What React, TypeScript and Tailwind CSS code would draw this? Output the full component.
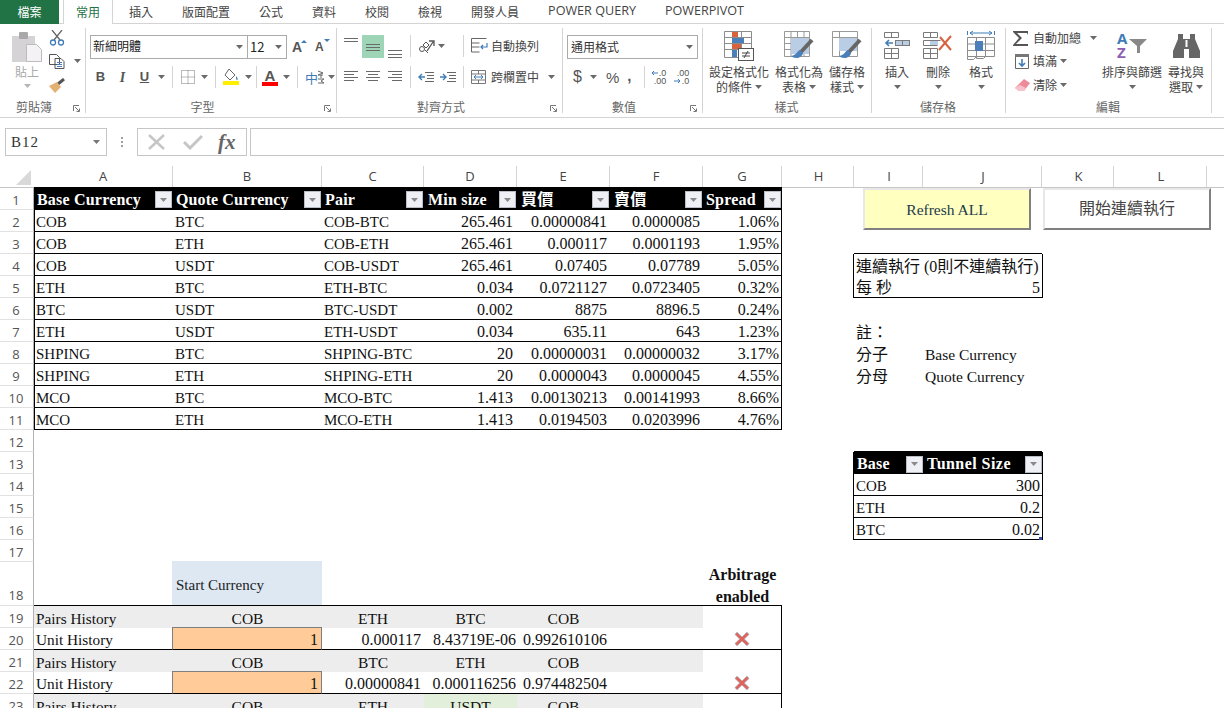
import React from "react";

const COLS = "grid grid-rows-[100%] grid-cols-[34px_139px_149px_102px_93px_93px_93px_79px_72px_69px_119px_72px_93px_17px]";
const UI = "font-['Noto_Sans_CJK_TC','Noto_Sans',sans-serif]";

const Caret = ({ c = "#6a6a6a" }: { c?: string }) => (
  <svg width="7" height="4" viewBox="0 0 7 4" className="shrink-0"><path d="M0 0h7L3.5 4z" fill={c} /></svg>
);
const Sep = () => <div className="w-px h-[22px] bg-[#d4d4d4] shrink-0" />;
const Launcher = () => (
  <svg width="8" height="8" viewBox="0 0 8 8" className="absolute right-[4px] bottom-0">
    <path d="M.5 6V.5H6M2 2l4 4M6.5 3.5v3h-3" fill="none" stroke="#777" />
  </svg>
);
const Lines = ({ ys, w = 14, lens }: { ys: number[]; w?: number; lens?: [number, number][] }) => (
  <svg width={w} height="14" viewBox={`0 0 ${w} 14`}>
    {ys.map((y, i) => (
      <path key={i} d={`M${lens ? lens[i][0] : 0} ${y + 0.5}H${lens ? lens[i][1] : w}`} stroke="#6a6a6a" />
    ))}
  </svg>
);

function Group({ w, label, launcher, children }: { w: string; label: string; launcher?: boolean; children: React.ReactNode }) {
  return (
    <div className={`${w} h-[85px] shrink-0 relative flex flex-col border-r border-[#d4d4d4]`}>
      <div className="flex-1 min-h-0">{children}</div>
      <div className={`h-[16px] leading-[20px] text-center text-[12px] text-[#666] ${launcher ? "pr-[17px]" : "pr-[1px]"}`}>{label}</div>
      {launcher && <Launcher />}
    </div>
  );
}

function Big({ w, icon, l1, l2, caret2, ml }: { w: string; icon: React.ReactNode; l1: string; l2?: string; caret2?: boolean; ml?: string }) {
  return (
    <div className={`${w} ${ml ?? ""} shrink-0 flex flex-col items-center`}>
      <div className="h-[36px] flex items-center justify-center">{icon}</div>
      <div className="h-[16px] leading-[16px] text-[12px] text-[#444] whitespace-nowrap">{l1}</div>
      <div className="h-[14px] leading-[14px] text-[12px] text-[#444] whitespace-nowrap flex items-center justify-center gap-[3px]">
        {l2}
        {caret2 !== false && <Caret />}
      </div>
    </div>
  );
}

const CFIcon = () => (
  <svg width="30" height="30" viewBox="0 0 30 30" fill="none">
    <path d="M.5.5h27v26H.5zM.5 6.5h27M.5 12.5h27M.5 18.5h27M8.500 .5v26M17.500 .5v26" stroke="#8c8c8c" />
    <rect x="8" y="1" width="6" height="5" fill="#d8623c" />
    <rect x="8" y="7" width="12" height="5" fill="#4a7fb9" />
    <rect x="8" y="13" width="9" height="5" fill="#d8623c" />
    <rect x="8" y="19" width="5" height="7" fill="#4a7fb9" />
    <rect x="14.500" y="17.500" width="15" height="12" fill="#fff" stroke="#555" />
    <path d="M18 22h8M18 25h8M24 20l-4 7" stroke="#444" />
  </svg>
);
const TableIcon = () => (
  <svg width="30" height="30" viewBox="0 0 30 30" fill="none">
    <path d="M.5.5h25v25H.5zM.5 6.500h25M.5 12.500h25M.5 18.500h25M7 .5v25M13.500 .5v25M20 .5v25" stroke="#999" />
    <rect x="7" y="7" width="18" height="16" fill="#b9cde5" />
    <path d="M28 9L17 21" stroke="#666" strokeWidth="4" />
    <path d="M16 19c-3 1-3 5-9 6 3 3 11 3 12-3z" fill="#4a7fb9" />
  </svg>
);
const StyleIcon = () => (
  <svg width="30" height="30" viewBox="0 0 30 30" fill="none">
    <path d="M.5.5h25v25H.5zM.5 6.500h25M7.500 .5v25" stroke="#999" />
    <rect x="7" y="7" width="18" height="13" fill="#b9cde5" />
    <path d="M28 9L17 21" stroke="#666" strokeWidth="4" />
    <path d="M16 19c-3 1-3 5-9 6 3 3 11 3 12-3z" fill="#4a7fb9" />
  </svg>
);
const InsertIcon = () => (
  <svg width="26" height="28" viewBox="0 0 26 28" fill="none">
    <path d="M.5.5h14v5H.5zM7.500.5v5M.5 16.500h14v10H.5zM.5 21.500h14M7.500 16.500v10" stroke="#7a7a7a" />
    <rect x="11.500" y="8.500" width="14" height="5" fill="#b9cde5" stroke="#7a7a7a" />
    <path d="M18.500 8.500v5" stroke="#7a7a7a" />
    <path d="M9 11H2M5 8l-3 3 3 3" stroke="#3f7cb8" strokeWidth="1.600" />
  </svg>
);
const DeleteIcon = () => (
  <svg width="30" height="28" viewBox="0 0 30 28" fill="none">
    <path d="M.5.5h14v5H.5zM7.500.5v5M.5 16.500h14v10H.5zM.5 21.500h14M7.500 16.500v10M.5 8.500h17M.5 13.500h14M.5 8.500v5" stroke="#7a7a7a" />
    <rect x="7" y="9" width="8" height="4" fill="#b9cde5" />
    <path d="M17 5l11 13M28 4L16 18" stroke="#d8623c" strokeWidth="2" />
  </svg>
);
const FormatIcon = () => (
  <svg width="28" height="30" viewBox="0 0 28 30" fill="none">
    <path d="M.5 0v4M27.500 0v4M3 2h22" stroke="#3f7cb8" />
    <path d="M3 2l3-2M3 2l3 2M25 2l-3-2M25 2l-3 2" stroke="#3f7cb8" />
    <path d="M.5 6.500h27v19H.5zM9.500 6.500v19M18.500 6.500v19M.5 13h27M.5 19.500h27M.5 25.500v3h6l3-3M9.500 25.500v2h7l2-2" stroke="#8c8c8c" />
    <rect x="8" y="10" width="8" height="10" fill="#4a7fb9" />
  </svg>
);

const Filter = () => (
  <div className="w-[17px] h-[17px] shrink-0 bg-[#eef0f5] border border-[#b8bdc6] flex items-center justify-center">
    <Caret c="#8a8a8a" />
  </div>
);

const XMark = () => (
  <svg width="16" height="16" viewBox="0 0 16 16">
    <path d="M3 1.200L8 6l5-4.800L15 3.400 10.300 8l4.700 4.600-2 2.200L8 10l-5 4.800-2-2.200L5.700 8 1 3.400z" fill="#e0635d" stroke="#a9a9a9" strokeWidth=".8" />
  </svg>
);

const RowBase = ({ n, h = "h-[22px]", align = "items-center pt-[3px]", top, children }: { n: number; h?: string; align?: string; top?: boolean; children: React.ReactNode }) => (
  <div className={`${COLS} ${h}`}>
    <div className={`border-r border-b border-r-[#b1b1b1] border-b-[#e1e1e1] ${top ? "border-t border-t-[#c6c6c6]" : ""} flex ${align} justify-center text-[#555] pr-[1px]`}>
      <span className="font-['Open_Sans',sans-serif] text-[13px] leading-[20px]">{n}</span>
    </div>
    {children}
  </div>
);
const E = () => <div />;
const Fill = ({ k = 1 }: { k?: number }) => <>{Array.from({ length: k }).map((_, i) => <E key={i} />)}</>;

const cell = "flex items-center pt-[3px] whitespace-nowrap leading-[20px] text-[#111]";
const L = ({ t, c = "text-[15px]", pl = "pl-[2px]" }: { t: string; c?: string; pl?: string }) => <div className={`${cell} ${pl} ${c}`}>{t}</div>;
const R = ({ t, c = "", pr = "pr-[3px]" }: { t: string | number; c?: string; pr?: string }) => <div className={`${cell} justify-end ${pr} ${c}`}>{t}</div>;
const M = ({ t, c = "" }: { t: string; c?: string }) => <div className={`${cell} justify-center text-[15.5px] ${c}`}>{t}</div>;

const H = ({ t, pl = "pl-[3px]", pr = "pr-[1px]", tr = "tracking-[0.2px]" }: { t: string; pl?: string; pr?: string; tr?: string }) => (
  <div className={`bg-black flex items-center justify-between pt-[2px] ${pl} ${pr} text-white font-bold ${tr}`}>
    <span className="whitespace-nowrap leading-[20px]">{t}</span>
    <Filter />
  </div>
);

const table: [string, string, string, string, string, string, string][] = [
  ["COB", "BTC", "COB-BTC", "265.461", "0.00000841", "0.0000085", "1.06%"],
  ["COB", "ETH", "COB-ETH", "265.461", "0.000117", "0.0001193", "1.95%"],
  ["COB", "USDT", "COB-USDT", "265.461", "0.07405", "0.07789", "5.05%"],
  ["ETH", "BTC", "ETH-BTC", "0.034", "0.0721127", "0.0723405", "0.32%"],
  ["BTC", "USDT", "BTC-USDT", "0.002", "8875", "8896.5", "0.24%"],
  ["ETH", "USDT", "ETH-USDT", "0.034", "635.11", "643", "1.23%"],
  ["SHPING", "BTC", "SHPING-BTC", "20", "0.00000031", "0.00000032", "3.17%"],
  ["SHPING", "ETH", "SHPING-ETH", "20", "0.0000043", "0.0000045", "4.55%"],
  ["MCO", "BTC", "MCO-BTC", "1.413", "0.00130213", "0.00141993", "8.66%"],
  ["MCO", "ETH", "MCO-ETH", "1.413", "0.0194503", "0.0203996", "4.76%"],
];

const BL = () => <div className="border-r border-black" />;
const KL = () => <div className="border-l border-black" />;

function right(n: number): React.ReactNode {
  if (n === 3)
    return (
      <>
        <E />
        <div className="border-b border-black" />
        <div className="border-b border-black" />
        <Fill k={3} />
      </>
    );
  if (n === 4)
    return (
      <>
        <BL />
        <div className={`${cell} pl-[2px]`}>連續執行 (0則不連續執行)</div>
        <E />
        <KL />
        <Fill k={2} />
      </>
    );
  if (n === 5)
    return (
      <>
        <BL />
        <L t="每 秒" c="border-b border-black text-[16px]" />
        <R t="5" c="border-b border-black" pr="pr-[2px]" />
        <KL />
        <Fill k={2} />
      </>
    );
  if (n === 7) return (<><E /><L t="註：" c="text-[16px]" /><Fill k={4} /></>);
  if (n === 8) return (<><E /><L t="分子" c="text-[16px]" /><L t="Base Currency" c="text-[15.5px]" /><Fill k={3} /></>);
  if (n === 9) return (<><E /><L t="分母" c="text-[16px]" /><L t="Quote Currency" c="text-[15.5px]" /><Fill k={3} /></>);
  return <Fill k={6} />;
}

function lowerRight(n: number): React.ReactNode {
  if (n === 12)
    return (
      <>
        <E />
        <div className="border-b border-black" />
        <div className="border-b border-black" />
        <Fill k={3} />
      </>
    );
  if (n === 13)
    return (
      <>
        <BL />
        <H t="Base" pr="pr-0" />
        <H t="Tunnel Size" pl="pl-[4px]" pr="pr-0" tr="tracking-[0.45px]" />
        <KL />
        <Fill k={2} />
      </>
    );
  const d: Record<number, [string, string]> = { 14: ["COB", "300"], 15: ["ETH", "0.2"], 16: ["BTC", "0.02"] };
  if (d[n])
    return (
      <>
        <BL />
        <L t={d[n][0]} c="border-b border-black text-[15px]" />
        <div className={`${cell} justify-end pr-[2px] border-b border-black relative`}>
          {d[n][1]}
          {n === 16 && <span className="absolute right-0 bottom-[-1px] w-[3px] h-[3px] bg-[#3a4fa8]" />}
        </div>
        <KL />
        <Fill k={2} />
      </>
    );
  return <Fill k={6} />;
}

const Pairs = ({ n, b, c, d, e, green }: { n: number; b: string; c: string; d: string; e: string; green?: boolean }) => (
  <RowBase n={n}>
    <L t="Pairs History" c="bg-[#ededed] text-[15.3px]" />
    <M t={b} c="bg-[#ededed]" />
    <M t={c} c="bg-[#ededed]" />
    <M t={d} c={green ? "bg-[#e2efda]" : "bg-[#ededed]"} />
    <M t={e} c="bg-[#ededed]" />
    <div className="bg-[#ededed]" />
    <div className="border-r border-black" />
    <Fill k={6} />
  </RowBase>
);
const Units = ({ n, c, d, e }: { n: number; c: string; d: string; e: string }) => (
  <RowBase n={n}>
    <L t="Unit History" c="border-b border-black text-[15.3px]" />
    <div className={`${cell} justify-end pr-[3px] -ml-px -mt-px bg-[#ffcc99] border border-[#7f7f7f] border-b-black text-[#3f3f76]`}>1</div>
    <R t={c} c="border-b border-black" />
    <R t={d} c="border-b border-black" pr="pr-[1px]" />
    <R t={e} c="border-b border-black" />
    <div className="border-b border-black" />
    <div className="border-r border-b border-black flex items-center justify-center">
      <XMark />
    </div>
    <Fill k={6} />
  </RowBase>
);

export default function App() {
  return (
    <div className="w-[1224px] h-[708px] overflow-hidden bg-white relative">
      {/* Tabs */}
      <div className={`${UI} h-[24px] flex border-b border-[#d4d4d4] text-[12px] text-[#444] relative`}>
        <div className="w-[59px] h-[24px] bg-[#217346] text-white flex items-center justify-center">檔案</div>
        <div className="ml-[4px] w-[50px] h-[24px] bg-white border-l border-r border-[#d4d4d4] text-[#217346] flex items-center justify-center">常用</div>
        <div className="ml-[16px] flex items-center gap-[29px] h-[23px] whitespace-nowrap">
          <span>插入</span>
          <span>版面配置</span>
          <span>公式</span>
          <span>資料</span>
          <span>校閱</span>
          <span>檢視</span>
          <span>開發人員</span>
          <span className="font-['Open_Sans',sans-serif] text-[12.6px]">POWER QUERY</span>
          <span className="font-['Open_Sans',sans-serif] text-[12.6px]">POWERPIVOT</span>
        </div>
      </div>

      {/* Ribbon */}
      <div className={`${UI} h-[94px] pt-[4px] border-b border-[#d4d4d4] flex`}>
        <Group w="w-[86px]" label="剪貼簿" launcher>
          <div className="flex pl-[12px]">
            <div className="w-[30px] flex flex-col items-center">
              <svg width="30" height="30" viewBox="0 0 30 30" className="mt-[4px]">
                <rect x="0" y="4" width="23" height="26" fill="#d6d3d6" />
                <rect x="7" y="0" width="9" height="7" rx="1" fill="#a9a9a9" />
                <path d="M14.500 12.500h10l5 5v12h-15z" fill="#f4f2f4" stroke="#bcbcbc" />
              </svg>
              <div className="text-[12px] leading-[16px] mt-[2px] text-[#aaa] whitespace-nowrap">貼上</div>
              <div className="mt-[4px]"><Caret c="#b5b5b5" /></div>
            </div>
            <div className="ml-[7px] flex flex-col">
              <div className="h-[20px] flex items-center">
                <svg width="16" height="16" viewBox="0 0 16 16" fill="none">
                  <path d="M3 0l8 10M13 0L5 10" stroke="#666" strokeWidth="1.300" />
                  <circle cx="4" cy="12.500" r="2.500" stroke="#3f7cb8" strokeWidth="1.300" />
                  <circle cx="12" cy="12.500" r="2.500" stroke="#3f7cb8" strokeWidth="1.300" />
                </svg>
              </div>
              <div className="h-[26px] flex items-center gap-[9px]">
                <svg width="16" height="15" viewBox="0 0 16 15" fill="none">
                  <path d="M.5.5h7l3 3v7h-10zM6 4.500h6l3 3v7H6z" stroke="#555" fill="#fff" />
                  <path d="M8 8.500h5M8 10.500h5M8 12.500h5" stroke="#4a7fb9" />
                </svg>
                <Caret />
              </div>
              <div className="h-[22px] flex items-center">
                <svg width="17" height="15" viewBox="0 0 17 15" fill="none">
                  <path d="M9 6l6-5" stroke="#555" strokeWidth="3" />
                  <path d="M0 8l8-4 4 5-6 6z" fill="#e3b172" />
                </svg>
              </div>
            </div>
          </div>
        </Group>

        <Group w="w-[251px]" label="字型" launcher>
          <div className="pl-[4px] pt-[7px] flex h-[31px] items-start">
            <div className="w-[158px] h-[24px] border border-[#ababab] flex items-center justify-between pl-[2px] pr-[4px] text-[12px] text-[#222] font-['Liberation_Serif','Noto_Sans_CJK_TC',serif]">
              <span>新細明體</span>
              <Caret />
            </div>
            <div className="w-[40px] -ml-px h-[24px] border border-[#ababab] flex items-center justify-between pl-[2px] pr-[4px] text-[13px] text-[#222]">
              <span>12</span>
              <Caret />
            </div>
            <div className="ml-[5px] h-[24px] flex items-center gap-[9px] text-[#555]">
              <span className="relative text-[14px] font-['Liberation_Sans',sans-serif] w-[14px] font-bold">
                A
                <svg width="6" height="3" viewBox="0 0 6 3" className="absolute right-[-1px] top-[3px]"><path d="M0 3h6L3 0z" fill="#3f7cb8" /></svg>
              </span>
              <span className="relative text-[12px] font-['Liberation_Sans',sans-serif] w-[14px] font-bold">
                A
                <svg width="6" height="3" viewBox="0 0 6 3" className="absolute right-[-1px] top-[1px]"><path d="M0 0h6L3 3z" fill="#3f7cb8" /></svg>
              </span>
            </div>
          </div>
          <div className="mt-[6px] h-[24px] flex items-center pl-[2px] font-['Liberation_Sans',sans-serif] text-[#555]">
            <div className="w-[25px] text-center font-bold text-[13px]">B</div>
            <div className="w-[19px] text-center italic font-['Liberation_Serif',serif] font-bold text-[14px]">I</div>
            <div className="w-[25px] text-center font-bold text-[13px] underline">U</div>
            <div className="w-[8px] flex justify-center"><Caret /></div>
            <div className="ml-[7px]"><Sep /></div>
            <svg width="14" height="14" viewBox="0 0 14 14" className="ml-[8px]" fill="none">
              <path d="M.5.5h13v13H.5zM.5 7h13M7 .5v13" stroke="#777" strokeDasharray="1 1" />
            </svg>
            <div className="ml-[6px]"><Caret /></div>
            <div className="ml-[7px]"><Sep /></div>
            <svg width="18" height="18" viewBox="0 0 18 18" className="ml-[7px]" fill="none">
              <path d="M6 1l6 6-5 5-5-5z" stroke="#666" fill="#fff" />
              <path d="M13 8c2 2 2 4 1 4s-1-2-1-4z" fill="#3f7cb8" />
              <rect x="0" y="13" width="16" height="4" fill="#ffee00" />
            </svg>
            <div className="ml-[4px]"><Caret /></div>
            <div className="ml-[4px] w-[3px]"><Sep /></div>
            <div className="ml-[3px] w-[16px] flex flex-col items-center">
              <span className="font-bold text-[15px] leading-[13px]">A</span>
              <span className="w-[16px] h-[4px] bg-[#ff0000]" />
            </div>
            <div className="ml-[5px]"><Caret /></div>
            <div className="ml-[7px]"><Sep /></div>
            <span className={`${UI} ml-[7px] text-[13px] text-[#3f7cb8] leading-none`}>中</span>
            <svg width="6" height="14" viewBox="0 0 6 14" fill="none"><path d="M0 1l5 2-5 2h5M3 5v3M0 9h6l-3 2 3 2H0" stroke="#666" /></svg>
            <div className="ml-[4px]"><Caret /></div>
          </div>
        </Group>

        <Group w="w-[226px]" label="對齊方式" launcher>
          <div className="pt-[7px] h-[31px] flex items-start pl-[7px]">
            <div className="w-[14px] h-[24px] flex items-start pt-[2px]"><Lines ys={[1, 4]} /></div>
            <div className="ml-[4px] w-[22px] h-[23px] bg-[#9fd5b7] flex items-center justify-center"><Lines ys={[4, 7, 10]} /></div>
            <div className="ml-[4px] w-[14px] h-[24px] flex items-end pb-[1px]"><Lines ys={[6, 10, 13]} /></div>
            <div className="ml-[8px]"><Sep /></div>
            <div className="ml-[7px] w-[17px] h-[22px] flex items-center">
              <svg width="17" height="16" viewBox="0 0 17 16" fill="none">
                <circle cx="4" cy="11" r="2.500" stroke="#555" />
                <path d="M5 7l3-3 3 3-3 3zM7 12l3 3" stroke="#555" />
                <path d="M9 13L15 4M11 3h5v5" stroke="#555" strokeWidth="1.300" />
              </svg>
            </div>
            <div className="ml-[3px] h-[22px] flex items-center"><Caret /></div>
            <div className="ml-[18px]"><Sep /></div>
            <svg width="17" height="15" viewBox="0 0 17 15" className="ml-[7px] mt-[3px]" fill="none">
              <path d="M.5.5h15M.5.500v13.500h8M.5 5h8M.5 9h8" stroke="#666" />
              <path d="M16 5v4h-6M12 7l-2 2 2 2" stroke="#3f7cb8" strokeWidth="1.200" />
            </svg>
            <span className="ml-[3px] mt-[2px] text-[12px] leading-[18px] text-[#444] whitespace-nowrap">自動換列</span>
          </div>
          <div className="mt-[6px] h-[24px] flex items-center pl-[7px]">
            <Lines ys={[1, 4, 7, 10]} lens={[[0, 14], [0, 10], [0, 14], [0, 10]]} />
            <div className="ml-[8px]"><Lines ys={[1, 4, 7, 10]} lens={[[0, 14], [2, 12], [0, 14], [2, 12]]} /></div>
            <div className="ml-[8px]"><Lines ys={[1, 4, 7, 10]} lens={[[0, 14], [4, 14], [0, 14], [4, 14]]} /></div>
            <div className="ml-[8px]"><Sep /></div>
            <svg width="16" height="10" viewBox="0 0 16 10" className="ml-[7px]" fill="none">
              <path d="M7 .5h9M9 3.500h7M9 6.500h7M7 9.500h9" stroke="#666" />
              <path d="M7 5H1M4 2L1 5l3 3" stroke="#3f7cb8" strokeWidth="1.400" />
            </svg>
            <svg width="16" height="10" viewBox="0 0 16 10" className="ml-[6px]" fill="none">
              <path d="M7 .5h9M9 3.500h7M9 6.500h7M7 9.500h9" stroke="#666" />
              <path d="M0 5h6M3 2l3 3-3 3" stroke="#3f7cb8" strokeWidth="1.400" />
            </svg>
            <div className="ml-[7px]"><Sep /></div>
            <svg width="15" height="14" viewBox="0 0 15 14" className="ml-[7px]" fill="none">
              <path d="M.5.5h14v13H.5zM.5 4h14M.5 10h14M7.500 .5V4M7.500 10v3.500" stroke="#777" />
              <path d="M3 7h9M5 5L3 7l2 2M10 5l2 2-2 2" stroke="#3f7cb8" />
            </svg>
            <span className="ml-[5px] text-[12px] leading-[18px] text-[#444] whitespace-nowrap">跨欄置中</span>
            <div className="ml-[9px]"><Caret /></div>
          </div>
        </Group>

        <Group w="w-[140px]" label="數值" launcher>
          <div className="pl-[4px] pt-[7px] h-[31px]">
            <div className="w-[131px] h-[24px] border border-[#ababab] flex items-center justify-between pl-[3px] pr-[4px] text-[12px] text-[#333]">
              <span className="-mt-px">通用格式</span>
              <Caret />
            </div>
          </div>
          <div className="mt-[6px] h-[24px] flex items-center pl-[10px] font-['Liberation_Sans',sans-serif] text-[#555]">
            <span className="w-[10px] text-[16px] leading-none">$</span>
            <div className="ml-[7px]"><Caret /></div>
            <span className="ml-[9px] text-[15px] leading-none">%</span>
            <span className="ml-[8px] text-[15px] font-bold leading-none w-[5px] -mt-[3px]">,</span>
            <div className="ml-[12px]"><Sep /></div>
            <div className="ml-[6px] w-[15px] flex flex-col text-[9px] leading-[8px] text-[#555] items-end whitespace-nowrap">
              <div className="flex items-center gap-[1px]">
                <svg width="7" height="6" viewBox="0 0 7 6" fill="none"><path d="M7 3H1M3 1L1 3l2 2" stroke="#3f7cb8" /></svg>
                <span>.0</span>
              </div>
              <span>.00</span>
            </div>
            <div className="ml-[8px] w-[15px] flex flex-col text-[9px] leading-[8px] text-[#555] items-end whitespace-nowrap">
              <span>.00</span>
              <div className="flex items-center gap-[1px]">
                <svg width="7" height="6" viewBox="0 0 7 6" fill="none"><path d="M0 3h6M4 1l2 2-2 2" stroke="#3f7cb8" /></svg>
                <span>.0</span>
              </div>
            </div>
          </div>
        </Group>

        <Group w="w-[169px]" label="樣式">
          <div className="flex pl-[6px]">
            <Big w="w-[60px]" icon={<CFIcon />} l1="設定格式化" l2="的條件" />
            <Big w="w-[48px]" ml="ml-[6px]" icon={<TableIcon />} l1="格式化為" l2="表格" />
            <Big w="w-[38px]" ml="ml-[5px]" icon={<StyleIcon />} l1="儲存格" l2="樣式" />
          </div>
        </Group>

        <Group w="w-[134px]" label="儲存格">
          <div className="flex pl-[5px]">
            <Big w="w-[40px]" icon={<InsertIcon />} l1="插入" />
            <Big w="w-[42px]" icon={<DeleteIcon />} l1="刪除" />
            <Big w="w-[42px]" ml="ml-[1px]" icon={<FormatIcon />} l1="格式" />
          </div>
        </Group>

        <Group w="w-[206px]" label="編輯">
          <div className="flex pl-[7px]">
            <div className="w-[90px] flex flex-col text-[12px] text-[#444]">
              <div className="h-[20px] flex items-center">
                <svg width="16" height="15" viewBox="0 0 16 15"><path d="M0 0h15v4l-1-2H4l5 5-6 6h12v2H0v-1l6-7L0 1z" fill="#555" /></svg>
                <span className="ml-[4px]">自動加總</span>
                <div className="ml-[9px]"><Caret /></div>
              </div>
              <div className="h-[26px] flex items-center">
                <svg width="14" height="15" viewBox="0 0 14 15" className="ml-[2px]" fill="none">
                  <path d="M.5.5h13v14H.5z" stroke="#666" />
                  <path d="M0 0h14v3H0z" fill="#777" />
                  <path d="M7 5v7M4 9l3 3 3-3" stroke="#3f7cb8" strokeWidth="1.600" />
                </svg>
                <span className="ml-[4px]">填滿</span>
                <div className="ml-[3px]"><Caret /></div>
              </div>
              <div className="h-[22px] flex items-center">
                <svg width="15" height="13" viewBox="0 0 15 13" className="ml-[2px]">
                  <path d="M9 0l6 4-6 8H4L0 9z" fill="#ef8a9b" />
                  <path d="M0 9l4 3h5l2-3-6-3z" fill="#f6c3cc" />
                </svg>
                <span className="ml-[3px]">清除</span>
                <div className="ml-[3px]"><Caret /></div>
              </div>
            </div>
            <div className="w-[58px] flex flex-col items-center">
              <div className="h-[36px] flex items-center">
                <div className="relative w-[30px] h-[28px] font-['Open_Sans',sans-serif] font-bold text-[15px] leading-[13px]">
                  <span className="absolute left-0 top-0 text-[#3f7cb8]">A</span>
                  <span className="absolute left-0 top-[14px] text-[#8c5fb3]">Z</span>
                  <svg width="18" height="14" viewBox="0 0 18 14" className="absolute right-0 top-[7px]"><path d="M0 0h18l-7 7v7H8V7z" fill="#888" /></svg>
                </div>
              </div>
              <div className="text-[12px] leading-[16px] text-[#444] whitespace-nowrap">排序與篩選</div>
              <div className="h-[14px] flex items-center"><Caret /></div>
            </div>
            <div className="ml-[7px] w-[36px]">
              <Big w="w-[36px]" icon={
                <svg width="27" height="24" viewBox="0 0 27 24" fill="#666">
                  <path d="M5 0h5v5h7V0h5v5l5 12v7H16v-9h-5v9H0v-7L5 5z" />
                  <path d="M12.500 6h2v7h-2z" fill="#fff" />
                </svg>
              } l1="尋找與" l2="選取" />
            </div>
          </div>
        </Group>
      </div>

      {/* Formula bar */}
      <div className="mt-[10px] h-[28px] flex font-['Liberation_Serif','Noto_Sans_CJK_TC',serif]">
        <div className="ml-[5px] w-[102px] h-[28px] border border-[#c6c6c6] flex items-center justify-between pl-[5px] pr-[6px] text-[15px] text-[#333] tracking-[1px]">
          <span className="pt-[1px]">B12</span>
          <Caret c="#777" />
        </div>
        <div className="w-[30px] flex items-center justify-center">
          <svg width="3" height="11" viewBox="0 0 3 11" fill="#a0a0a0"><rect y="0" width="2" height="2" /><rect y="4" width="2" height="2" /><rect y="8" width="2" height="2" /></svg>
        </div>
        <div className="w-[110px] h-[28px] border border-[#c6c6c6] flex items-center pl-[10px]">
          <svg width="18" height="16" viewBox="0 0 18 16" fill="none"><path d="M1 1l15 14M16 1L1 15" stroke="#c6c6c6" strokeWidth="2.500" /></svg>
          <svg width="20" height="16" viewBox="0 0 20 16" fill="none" className="ml-[17px]"><path d="M1 8l6 6L19 2" stroke="#c6c6c6" strokeWidth="3" /></svg>
          <span className="ml-[15px] italic font-bold text-[#666] text-[21px] leading-none">fx</span>
        </div>
        <div className="ml-[3px] flex-1 h-[28px] border border-r-0 border-[#c6c6c6]" />
      </div>

      {/* Sheet */}
      <div className="mt-[9px] relative text-[16px] font-['Liberation_Serif','Noto_Sans_CJK_TC',serif]">
        <div className={`${COLS} h-[22px] font-['Open_Sans',sans-serif] text-[13px] text-[#444]`}>
          <div className="relative">
            <svg width="15" height="15" viewBox="0 0 15 15" className="absolute left-[16px] top-[5px]"><path d="M15 0v15H0z" fill="#d9d9d9" /></svg>
          </div>
          {["A", "B", "C", "D", "E", "F", "G", "H", "I", "J", "K", "L", ""].map((c, i) => (
            <div key={i} className={`flex items-center justify-center mt-px ${c ? "border-r border-[#d4d4d4]" : ""} ${i >= 7 ? "pl-[2px]" : ""}`}>{c}</div>
          ))}
        </div>

        <RowBase n={1} h="h-[23px]" top>
          <H t="Base Currency" />
          <H t="Quote Currency" tr="tracking-[0.1px]" />
          <H t="Pair" />
          <H t="Min size" pl="pl-[4px]" />
          <H t="買價" pl="pl-[4px]" />
          <H t="賣價" pl="pl-[4px]" />
          <H t="Spread" />
          {Array.from({ length: 6 }).map((_, i) => <div key={i} className="border-t border-[#c6c6c6]" />)}
        </RowBase>

        {table.map((r, i) => (
          <RowBase key={i} n={i + 2}>
            <L t={r[0]} c="border-l border-b border-black text-[15px]" pl="pl-[1px]" />
            <L t={r[1]} c="border-b border-black text-[15px]" />
            <L t={r[2]} c="border-b border-black text-[15px]" />
            <R t={r[3]} c="border-b border-black" pr="pr-[4px]" />
            <R t={r[4]} c="border-b border-black" />
            <R t={r[5]} c="border-b border-black" />
            <R t={r[6]} c="border-b border-r border-black" pr="pr-[2px]" />
            {right(i + 2)}
          </RowBase>
        ))}

        {[12, 13, 14, 15, 16, 17].map((n) => (
          <RowBase key={n} n={n}>
            <Fill k={7} />
            {lowerRight(n)}
          </RowBase>
        ))}

        <RowBase n={18} h="h-[44px]" align="items-end">
          <div className="border-b border-black" />
          <div className="bg-[#dde8f3] border-b border-black flex items-center -ml-px -mt-px pl-[4px] pt-[4px] text-[15px] text-[#222]">Start Currency</div>
          <div className="border-b border-black" />
          <div className="border-b border-black" />
          <div className="border-b border-black" />
          <div className="border-b border-black" />
          <div className="border-b border-black flex flex-col items-center justify-center pt-[5px] text-[16px] font-bold leading-[22px] text-[#111]">
            <span>Arbitrage</span>
            <span>enabled</span>
          </div>
          <Fill k={6} />
        </RowBase>

        <Pairs n={19} b="COB" c="ETH" d="BTC" e="COB" />
        <Units n={20} c="0.000117" d="8.43719E-06" e="0.992610106" />
        <Pairs n={21} b="COB" c="BTC" d="ETH" e="COB" />
        <Units n={22} c="0.00000841" d="0.000116256" e="0.974482504" />
        <Pairs n={23} b="COB" c="ETH" d="USDT" e="COB" green />

        {/* Sheet shapes floating over the cells */}
        <div className="absolute left-[863px] top-[23px] w-[168px] h-[42px] bg-[#ffffc0] border-2 border-[#e8e8e8] border-r-[#808080] border-b-[#808080] flex items-center justify-center pt-[1px] text-[15.5px] text-[#1c3a4a]">Refresh ALL</div>
        <div className="absolute left-[1043px] top-[23px] w-[168px] h-[42px] bg-white border-2 border-[#e8e8e8] border-r-[#808080] border-b-[#808080] flex items-center justify-center text-[16px] text-[#444]">開始連續執行</div>
      </div>
    </div>
  );
}
